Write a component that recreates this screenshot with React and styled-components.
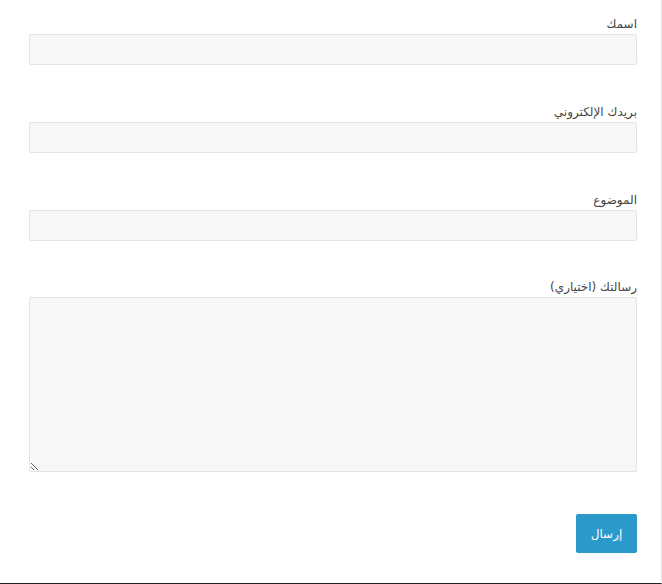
import React from "react";
import styled, { createGlobalStyle } from "styled-components";

const GlobalStyle = createGlobalStyle`
  html, body {
    margin: 0;
    padding: 0;
    background: #ffffff;
  }
  * {
    box-sizing: border-box;
  }
`;

const Page = styled.div`
  width: 662px;
  height: 584px;
  background: #ffffff;
  border-right: 1px solid #e6e6e6;
  border-bottom: 1px solid #222222;
`;

const Form = styled.form`
  direction: rtl;
  display: flex;
  flex-direction: column;
  padding: 14px 24px 0 29px;
  font-family: "DejaVu Sans", "Noto Sans", sans-serif;
`;

const Field = styled.div`
  display: flex;
  flex-direction: column;
  margin-bottom: ${(props) => props.gap || 37}px;
`;

const Label = styled.label`
  display: block;
  font-size: 12px;
  line-height: 20px;
  color: #444444;
`;

const Input = styled.input`
  width: 100%;
  height: 31px;
  border: 1px solid #e4e4e4;
  border-radius: 2px;
  background: #f7f7f7;
  outline: none;
  padding: 0 8px;
`;

const TextArea = styled.textarea`
  width: 100%;
  height: 175px;
  border: 1px solid #e4e4e4;
  border-radius: 2px;
  background: #f7f7f7;
  outline: none;
  padding: 8px;
  resize: vertical;
  font-family: inherit;
`;

const Actions = styled.div`
  display: flex;
  justify-content: flex-start;
`;

const Button = styled.button`
  width: 61px;
  height: 39px;
  border: none;
  border-radius: 2px;
  background: #2b9acb;
  color: #ffffff;
  font-family: "DejaVu Sans", "Noto Sans", sans-serif;
  font-size: 12px;
  cursor: pointer;
`;

const App = () => (
  <Page>
    <GlobalStyle />
    <Form onSubmit={(e) => e.preventDefault()}>
      <Field>
        <Label>اسمك</Label>
        <Input type="text" />
      </Field>
      <Field>
        <Label>بريدك الإلكتروني</Label>
        <Input type="email" />
      </Field>
      <Field gap={36}>
        <Label>الموضوع</Label>
        <Input type="text" />
      </Field>
      <Field gap={42}>
        <Label>رسالتك (اختياري)</Label>
        <TextArea />
      </Field>
      <Actions>
        <Button type="submit">إرسال</Button>
      </Actions>
    </Form>
  </Page>
);

export default App;
